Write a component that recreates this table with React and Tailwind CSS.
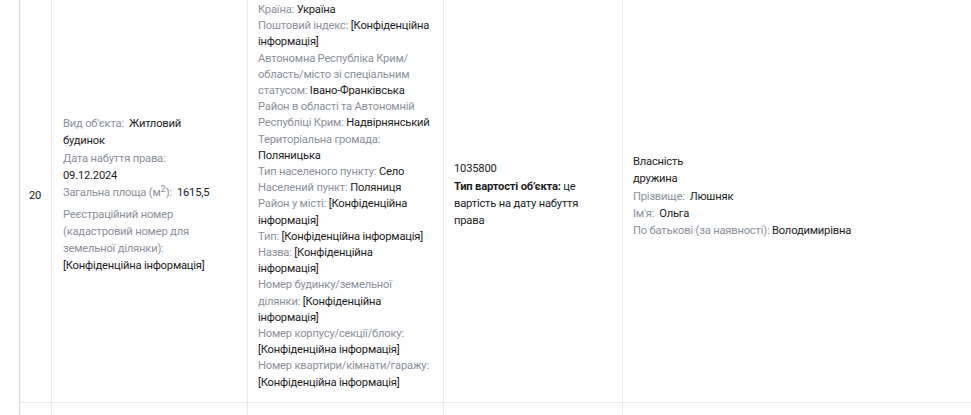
import React from "react";

const Label = ({ children, gap }) => (
  <span className={gap ? "text-[#8c909b] mr-[5px]" : "text-[#8c909b]"}>{children}</span>
);

const Val = ({ children }) => <span className="text-[#1c1c1e]">{children}</span>;

const addressRows = [
  ["Країна:", "Україна"],
  ["Поштовий індекс:", "[Конфіденційна інформація]"],
  ["Автономна Республіка Крим/ область/місто зі спеціальним статусом:", "Івано-Франківська"],
  ["Район в області та Автономній Республіці Крим:", "Надвірнянський"],
  ["Територіальна громада:", "Поляницька"],
  ["Тип населеного пункту:", "Село"],
  ["Населений пункт:", "Поляниця"],
  ["Район у місті:", "[Конфіденційна інформація]"],
  ["Тип:", "[Конфіденційна інформація]"],
  ["Назва:", "[Конфіденційна інформація]"],
  ["Номер будинку/земельної ділянки:", "[Конфіденційна інформація]"],
  ["Номер корпусу/секції/блоку:", "[Конфіденційна інформація]"],
  ["Номер квартири/кімнати/гаражу:", "[Конфіденційна інформація]"],
];

export default function App() {
  return (
    <div
      className="w-[971px] h-[415px] overflow-hidden bg-white text-[11.2px] tracking-[-0.2px]"
      style={{ fontFamily: "Roboto, 'Noto Sans', sans-serif" }}
    >
      <div className="pl-[19px] -mt-[9px]">
        {/* main row */}
        <div className="flex border-l border-[#d6d6d6] border-b border-b-[#ececec]">
          <div className="w-[31px] shrink-0 flex items-center pl-[9px] text-[#1c1c1e]">20</div>

          <div className="w-[196px] shrink-0 border-l border-[#ececec] pl-[11px] flex flex-col justify-center leading-[17.3px]">
            <div className="w-[145px] -mt-[3px]">
              <div>
                <Label gap>Вид об'єкта:</Label>
                <Val>Житловий будинок</Val>
              </div>
              <div>
                <Label>Дата набуття права:</Label> <Val>09.12.2024</Val>
              </div>
              <div className="whitespace-nowrap">
                <Label gap>
                  Загальна площа (м<sup className="text-[9.5px] leading-none">2</sup>):
                </Label>
                <Val>1615,5</Val>
              </div>
              <div className="mt-[4px]">
                <Label>Реєстраційний номер (кадастровий номер для земельної ділянки):</Label>{" "}
                <Val>[Конфіденційна інформація]</Val>
              </div>
            </div>
          </div>

          <div className="w-[196px] shrink-0 border-l border-[#ececec] px-[10px] py-[11px] leading-[16.2px]">
            {addressRows.map(([l, v]) => (
              <div key={l}>
                <Label>{l}</Label> <Val>{v}</Val>
              </div>
            ))}
          </div>

          <div className="w-[179px] shrink-0 border-l border-[#ececec] pl-[10px] pr-[22px] flex flex-col justify-center leading-[17.3px] text-[#1c1c1e]">
            <div className="-mt-[3px]">1035800</div>
            <div>
              <span className="font-bold">Тип вартості об’єкта:</span> це вартість на дату набуття права
            </div>
          </div>

          <div className="flex-1 border-l border-[#ececec] px-[10px] flex flex-col justify-center leading-[17.3px]">
            <div className="text-[#1c1c1e]">Власність</div>
            <div className="text-[#1c1c1e]">дружина</div>
            <div>
              <Label gap>Прізвище:</Label>
              <Val>Люшняк</Val>
            </div>
            <div>
              <Label gap>Ім'я:</Label>
              <Val>Ольга</Val>
            </div>
            <div>
              <Label>По батькові (за наявності):</Label> <Val>Володимирівна</Val>
            </div>
          </div>
        </div>

        {/* next row, partly visible */}
        <div className="flex h-[20px] border-l border-[#d6d6d6]">
          <div className="w-[31px] shrink-0" />
          <div className="w-[196px] shrink-0 border-l border-[#ececec]" />
          <div className="w-[196px] shrink-0 border-l border-[#ececec]" />
          <div className="w-[179px] shrink-0 border-l border-[#ececec]" />
          <div className="flex-1 border-l border-[#ececec]" />
        </div>
      </div>
    </div>
  );
}
